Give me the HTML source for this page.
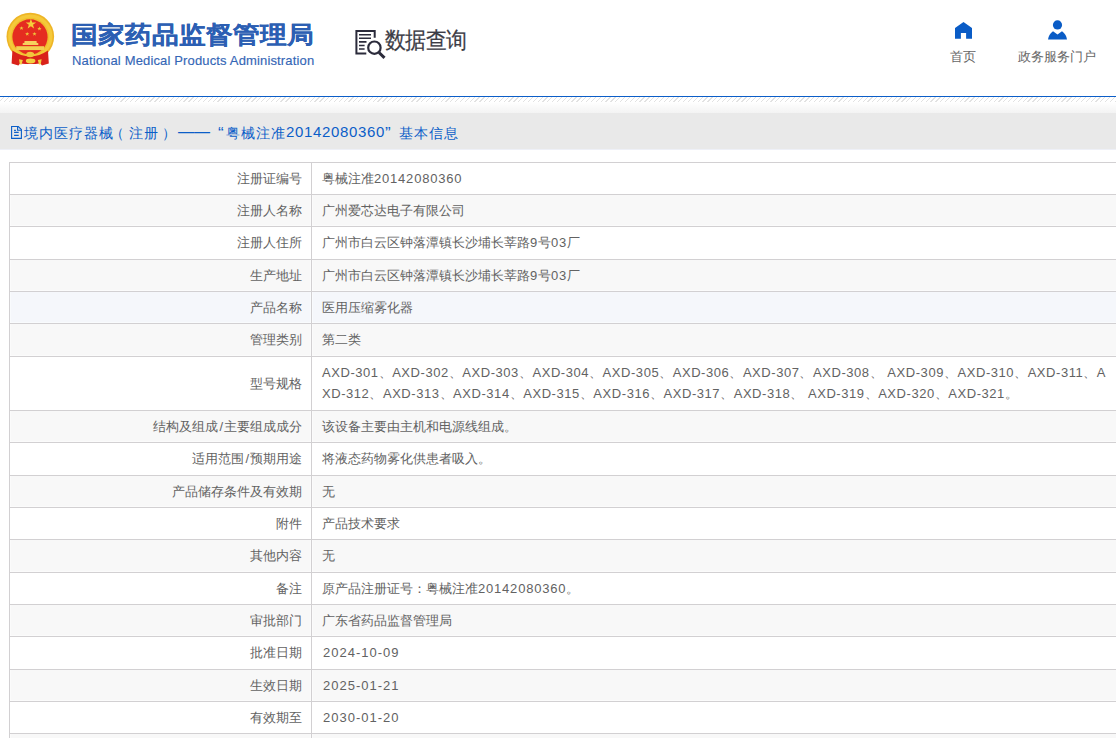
<!DOCTYPE html>
<html><head><meta charset="utf-8">
<style>
*{margin:0;padding:0;box-sizing:border-box}
html,body{width:1116px;height:738px;overflow:hidden;background:#fff}
body{font-family:"Liberation Sans",sans-serif;position:relative;color:#555}
.abs{position:absolute;white-space:nowrap}
#title{left:71px;top:15px;font-size:27px;font-weight:bold;color:#2c5fb3;line-height:38px;transform:scaleY(0.9);transform-origin:0 31px;-webkit-text-stroke:0.15px #2c5fb3}
#eng{left:72px;top:53px;font-size:13px;color:#3466b6;line-height:16px;letter-spacing:0.15px;-webkit-text-stroke:0.15px #3466b6}
#sjcx{left:385px;top:24px;font-size:21px;letter-spacing:-0.6px;color:#3c3c46;line-height:30px;transform:scaleY(1.1);transform-origin:0 4px;-webkit-text-stroke:0.2px #3c3c46}
.nav{font-size:13px;color:#666;line-height:16px;margin-top:2px}
#line{left:0;top:96px;width:1116px;height:1px;background:#0b5ec8}
#hatch{left:0;top:97px;width:1116px;height:5px;
 background:repeating-linear-gradient(135deg,#fff 0,#fff 2.55px,#e2e2e2 2.55px,#e2e2e2 3.43px)}
#grad{left:0;top:102px;width:1116px;height:11px;background:linear-gradient(#fff,#f3f3f3)}
#band{left:0;top:113px;width:1116px;height:36px;background:#e9e9e9;border-bottom:1px solid #eef0f7;height:37px}
#crumb{left:0;top:124px;width:1px;height:18px;font-size:14px;color:#0b5ec8;line-height:18px}
#crumb span{top:0}
#crumb .cj{letter-spacing:1px}
#crumb .dg{font-size:15px;letter-spacing:0.65px;top:-1px}
.row{position:absolute;left:9px;width:1107px;border-top:1px solid #d2d0d2;border-left:1px solid #d2d0d2}
.row .k{position:absolute;left:0;width:302px;top:0;bottom:0;border-right:1px solid #d2d0d2}
.row .k span{position:absolute;right:9px;white-space:nowrap}
.row .v{position:absolute;left:312px;white-space:nowrap}
.row span,.row .v{font-size:13px;line-height:16px;color:#626262}
.g{background:#f8f8f8}
.h{background:#f5f7fb}
.g .k,.h .k{box-shadow:inset 1px 0 rgba(255,255,255,.45),inset -1px 0 rgba(255,255,255,.45),inset 0 -1px rgba(255,255,255,.45)}
.g::after,.h::after{content:"";position:absolute;left:302px;right:0;top:0;bottom:0;box-shadow:inset 1px 0 rgba(255,255,255,.45),inset 0 -1px rgba(255,255,255,.45);pointer-events:none}
.l{letter-spacing:0.8px}
.lm{letter-spacing:0.55px}
.ld{letter-spacing:1px;margin-left:1px}
.sl{font-style:normal;margin:0 1px}
</style></head><body>

<!-- emblem -->
<svg class="abs" style="left:0;top:0" width="64" height="72" viewBox="0 0 64 72">
 <circle cx="30.3" cy="36.6" r="23.8" fill="#eeb526"/>
 <circle cx="30.3" cy="36.6" r="22.2" fill="#f5c93a"/>
 <circle cx="30.1" cy="36.8" r="19" fill="#f0be2c"/>
 <circle cx="30" cy="36.9" r="17.6" fill="#e52c20"/>
 <polygon fill="#f5cf3a" points="30.9,18.7 32.2,22.4 36.1,22.4 33,24.8 34.1,28.5 30.9,26.2 27.7,28.5 28.8,24.8 25.7,22.4 29.6,22.4"/>
 <polygon fill="#efc43a" points="21.5,26.2 22.1,27.6 23.6,27.6 22.4,28.6 22.8,30 21.5,29.1 20.2,30 20.6,28.6 19.4,27.6 20.9,27.6"/>
 <polygon fill="#efc43a" points="39.4,26.6 40,28 41.5,28 40.3,29 40.7,30.4 39.4,29.5 38.1,30.4 38.5,29 37.3,28 38.8,28"/>
 <polygon fill="#efc43a" points="27.2,31.9 27.8,33.3 29.3,33.3 28.1,34.3 28.5,35.7 27.2,34.8 25.9,35.7 26.3,34.3 25.1,33.3 26.6,33.3"/>
 <polygon fill="#efc43a" points="34.5,31.9 35.1,33.3 36.6,33.3 35.4,34.3 35.8,35.7 34.5,34.8 33.2,35.7 33.6,34.3 32.4,33.3 33.9,33.3"/>
 <path d="M24.5,41 H36.6 V42.8 L38.3,43.2 V45 H22.7 V43.2 L24.5,42.8 Z" fill="#f6d25e"/>
 <rect x="16.2" y="46.2" width="27.9" height="3.9" fill="#f3cf52"/>
 <path d="M12.4,50.6 Q21,56.4 30.2,56.6 Q39.4,56.4 48,50.6 L48.8,63.6 L42,65.5 L40.3,63.4 Q30.2,64.8 20.1,63.4 L18.4,65.5 L11.6,63.6 Z" fill="#d9221a"/>
 <ellipse cx="30.2" cy="54.5" rx="4" ry="2.7" fill="#f2c63e"/>
 <ellipse cx="30.6" cy="61" rx="4.8" ry="2.4" fill="#f3d040"/>
 <path d="M19,59.3 L22.8,60.1 L21.6,64.6 L19.8,64.2 Z M41.6,59.3 L37.8,60.1 L39,64.6 L40.8,64.2 Z" fill="#f3d040"/>
</svg>

<div id="title" class="abs">国家药品监督管理局</div>
<div id="eng" class="abs">National Medical Products Administration</div>

<!-- query icon -->
<svg class="abs" style="left:350px;top:22px" width="40" height="40" viewBox="0 0 40 40">
 <g fill="none" stroke="#2b2b3b" stroke-width="2">
  <path d="M16.3,31.4 H6.4 V8.9 H24.7 V15.7"/>
  <path d="M9,12.7 H21 M9,16.3 H21 M9,19.9 H16.5 M9,23.5 H14.6 M9,27 H14.6" stroke-width="1.6"/>
  <circle cx="24.4" cy="25.7" r="6.2" stroke-width="2.2"/>
 </g>
 <path d="M29,30.5 L34.5,35.8" stroke="#2b2b3b" stroke-width="3"/>
</svg>
<div id="sjcx" class="abs">数据查询</div>

<!-- home -->
<svg class="abs" style="left:950px;top:18px" width="28" height="24" viewBox="0 0 28 24">
 <path d="M13.5,4 L22,10 V20.8 H16.1 V14.9 H10.9 V20.8 H5 V10 Z" fill="#0a5cc6"/>
</svg>
<div class="abs nav" style="left:950px;top:47px">首页</div>

<!-- person -->
<svg class="abs" style="left:1044px;top:18px" width="28" height="24" viewBox="0 0 28 24">
 <circle cx="13.5" cy="6.9" r="4.6" fill="#0a5cc6"/>
 <path d="M4,21.6 Q4.5,16.5 9,13.2 L13.5,16.4 L18,13.2 Q22.5,16.5 23,21.6 Z" fill="#0a5cc6"/>
</svg>
<div class="abs nav" style="left:1018px;top:47px">政务服务门户</div>

<div id="line" class="abs"></div>
<div id="hatch" class="abs"></div>
<div id="grad" class="abs"></div>
<div id="band" class="abs"></div>

<!-- crumb icon -->
<svg class="abs" style="left:10px;top:125px" width="14" height="16" viewBox="0 0 14 16">
 <g fill="none" stroke="#0b5ec8" stroke-width="1.1">
  <path d="M1.6,1.5 H8.3 L11.4,4.6 V13.4 H1.6 Z"/>
  <path d="M7.6,1.5 V5.3 H11.4"/>
  <path d="M4.1,5.4 H5.9 M4.1,7.4 H8.7 M4.1,10.4 H8.7"/>
 </g>
</svg>
<div id="crumb" class="abs">
<span class="abs cj" style="left:24px">境内医疗器械</span>
<span class="abs" style="left:110px">（</span>
<span class="abs cj" style="left:129px">注册</span>
<span class="abs" style="left:162px">）</span>
<span class="abs" style="left:178px;font-size:16px;top:-1px">——</span>
<span class="abs" style="left:218px;font-size:17px;top:1px">“</span>
<span class="abs cj" style="left:226px">粤械注准</span>
<span class="abs dg" style="left:286px">20142080360</span>
<span class="abs" style="left:385px;font-size:17px;top:1px">”</span>
<span class="abs cj" style="left:399px">基本信息</span>
</div>

<div id="tbl">
<div class="row" style="top:162px;height:32px"><div class="k"><span style="top:8px">注册证编号</span></div><div class="v" style="top:8px">粤械注准<span class=l>20142080360</span></div></div>
<div class="row g" style="top:194px;height:32px"><div class="k"><span style="top:8px">注册人名称</span></div><div class="v" style="top:8px">广州爱芯达电子有限公司</div></div>
<div class="row" style="top:226px;height:33px"><div class="k"><span style="top:8px">注册人住所</span></div><div class="v" style="top:8px">广州市白云区钟落潭镇长沙埔长莘路<span class=l>9</span>号<span class=l>03</span>厂</div></div>
<div class="row g" style="top:259px;height:32px"><div class="k"><span style="top:8px">生产地址</span></div><div class="v" style="top:8px">广州市白云区钟落潭镇长沙埔长莘路<span class=l>9</span>号<span class=l>03</span>厂</div></div>
<div class="row h" style="top:291px;height:32px"><div class="k"><span style="top:8px">产品名称</span></div><div class="v" style="top:8px">医用压缩雾化器</div></div>
<div class="row g" style="top:323px;height:33px"><div class="k"><span style="top:8px">管理类别</span></div><div class="v" style="top:8px">第二类</div></div>
<div class="row" style="top:356px;height:54px"><div class="k"><span style="top:19px">型号规格</span></div><div class="v" style="top:8px"><span class=lm>AXD-301、AXD-302、AXD-303、AXD-304、AXD-305、AXD-306、AXD-307、AXD-308、 AXD-309、AXD-310、AXD-311、A</span></div><div class="v" style="top:29px"><span class=lm>XD-312、AXD-313、AXD-314、AXD-315、AXD-316、AXD-317、AXD-318、 AXD-319、AXD-320、AXD-321。</span></div></div>
<div class="row g" style="top:410px;height:32px"><div class="k"><span style="top:8px">结构及组成<i class=sl>/</i>主要组成成分</span></div><div class="v" style="top:8px">该设备主要由主机和电源线组成。</div></div>
<div class="row" style="top:442px;height:33px"><div class="k"><span style="top:8px">适用范围<i class=sl>/</i>预期用途</span></div><div class="v" style="top:8px">将液态药物雾化供患者吸入。</div></div>
<div class="row g" style="top:475px;height:32px"><div class="k"><span style="top:8px">产品储存条件及有效期</span></div><div class="v" style="top:8px">无</div></div>
<div class="row" style="top:507px;height:32px"><div class="k"><span style="top:8px">附件</span></div><div class="v" style="top:8px">产品技术要求</div></div>
<div class="row g" style="top:539px;height:33px"><div class="k"><span style="top:8px">其他内容</span></div><div class="v" style="top:8px">无</div></div>
<div class="row" style="top:572px;height:32px"><div class="k"><span style="top:8px">备注</span></div><div class="v" style="top:8px">原产品注册证号：粤械注准<span class=l>20142080360</span>。</div></div>
<div class="row g" style="top:604px;height:32px"><div class="k"><span style="top:8px">审批部门</span></div><div class="v" style="top:8px">广东省药品监督管理局</div></div>
<div class="row" style="top:636px;height:33px"><div class="k"><span style="top:8px">批准日期</span></div><div class="v" style="top:8px"><span class=ld>2024-10-09</span></div></div>
<div class="row g" style="top:669px;height:32px"><div class="k"><span style="top:8px">生效日期</span></div><div class="v" style="top:8px"><span class=ld>2025-01-21</span></div></div>
<div class="row" style="top:701px;height:32px"><div class="k"><span style="top:8px">有效期至</span></div><div class="v" style="top:8px"><span class=ld>2030-01-20</span></div></div>
<div class="row g" style="top:733px;height:33px"><div class="k"><span style="top:8px"></span></div><div class="v" style="top:8px"></div></div>
</div>
</body></html>
